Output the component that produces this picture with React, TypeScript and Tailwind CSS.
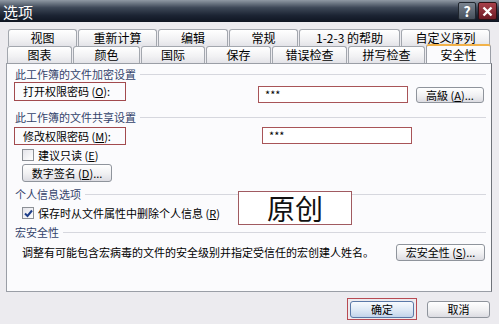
import React from 'react';

const row1 = [
  { label: '视图', w: 69 },
  { label: '重新计算', w: 79 },
  { label: '编辑', w: 70 },
  { label: '常规', w: 69 },
  { label: '1-2-3 的帮助', w: 101 },
  { label: '自定义序列', w: 89 },
];

const row2 = [
  { label: '图表', w: 65 },
  { label: '颜色', w: 67 },
  { label: '国际', w: 64 },
  { label: '保存', w: 65 },
  { label: '错误检查', w: 75 },
  { label: '拼写检查', w: 77 },
  { label: '安全性', w: 65, active: true },
];

const Tab: React.FC<{ label: string; w: number; active?: boolean }> = ({ label, w, active }) => (
  <div
    style={{ width: w }}
    className={
      active
        ? 'relative z-10 -mt-[1px] flex h-[19px] shrink-0 items-center justify-center rounded-t-[3px] border border-b-0 border-[#9a9ea6] border-t-[#f2b24a] border-t-2 bg-[#fbfbfd] pt-[1px] text-[12px] leading-none text-black'
        : 'flex h-[17px] shrink-0 items-center justify-center rounded-t-[3px] border border-b-0 border-[#a3a7ae] bg-[linear-gradient(to_bottom,#ffffff,#f1f1f3_60%,#e3e3e8)] text-[12px] leading-none text-black'
    }
  >
    {label}
  </div>
);

const GroupHeader: React.FC<{ title: string; className?: string }> = ({ title, className }) => (
  <div className={`ml-[8px] mr-[5px] flex h-[14px] items-center gap-[4px] ${className ?? ''}`}>
    <span className="whitespace-nowrap text-[11px] leading-none text-[#33436b]">{title}</span>
    <div className="h-px flex-1 bg-[#d6d7de]" />
  </div>
);

const XpButton: React.FC<{ children: React.ReactNode; className?: string }> = ({ children, className }) => (
  <div
    className={`flex items-center justify-center rounded-[3px] border border-[#8f949c] bg-[linear-gradient(to_bottom,#ffffff,#f0f0f2_55%,#dcdce2)] text-[11px] leading-none text-black ${className ?? ''}`}
  >
    {children}
  </div>
);

const Checkbox: React.FC<{ checked?: boolean }> = ({ checked }) => (
  <div className="flex h-[12px] w-[12px] items-center justify-center border border-[#8c9096] bg-[linear-gradient(135deg,#e4e4ea,#ffffff)]">
    {checked && (
      <svg width="9" height="9" viewBox="0 0 9 9">
        <path d="M1 4.5 L3.5 7 L8 1.5" fill="none" stroke="#1f3f8a" strokeWidth="2" />
      </svg>
    )}
  </div>
);

export default function App() {
  return (
    <div className="flex h-[324px] w-[499px] flex-col overflow-hidden bg-[#ecebef] font-['Noto_Sans_CJK_SC','Noto_Sans',sans-serif]">
      {/* title bar */}
      <div className="flex h-[22px] shrink-0 items-center justify-between bg-[linear-gradient(to_bottom,#9099a4,#3d4757_35%,#1c2433_70%,#0f1522)] pl-[3px] pr-[2px]">
        <span className="text-[15px] leading-none text-white">选项</span>
        <div className="flex gap-[2px]">
          <div className="flex h-[18px] w-[18px] items-center justify-center rounded-[2px] border border-[#20262e] bg-[linear-gradient(to_bottom,#7a8490,#454e5a)] text-[14px] font-bold leading-none text-white">
            ?
          </div>
          <div className="flex h-[18px] w-[19px] items-center justify-center rounded-[2px] border border-[#2a1014] bg-[linear-gradient(to_bottom,#a8404a,#6e1c26)]">
            <svg width="11" height="11" viewBox="0 0 11 11">
              <path d="M1.5 1.5 L9.5 9.5 M9.5 1.5 L1.5 9.5" stroke="#ffffff" strokeWidth="2.4" />
            </svg>
          </div>
        </div>
      </div>

      {/* tabs */}
      <div className="mt-[7px] flex flex-col">
        <div className="ml-[8px] flex gap-[1px]">
          {row1.map((t) => (
            <Tab key={t.label} {...t} />
          ))}
        </div>
        <div className="ml-[7px] -mt-px flex items-end gap-[1px]">
          {row2.map((t) => (
            <Tab key={t.label} {...t} />
          ))}
        </div>
      </div>

      {/* panel */}
      <div className="relative ml-[6px] h-[229px] w-[486px] shrink-0 border border-[#9a9ea6] border-r-[#6f737a] bg-[#fbfbfd] text-[11px] text-black">
        <GroupHeader title="此工作簿的文件加密设置" className="mt-[3px]" />

        <div className="mt-px flex h-[21px] items-start">
          <div className="ml-[7px] flex h-[19px] w-[112px] items-center border border-[#a24a4e] pl-[8px] leading-none">
            打开权限密码 (<u>O</u>):
          </div>
          <div className="ml-[132px] mt-[4px] flex h-[17px] w-[150px] items-center border border-[#a85458] bg-white pl-[6px] leading-none">
            ***
          </div>
          <XpButton className="ml-[8px] mt-[5px] h-[16px] w-[68px]">
            高級 (<u>A</u>)...
          </XpButton>
        </div>

        <GroupHeader title="此工作簿的文件共享设置" className="mt-[7px]" />

        <div className="mt-[3px] flex h-[18px] items-start">
          <div className="ml-[7px] flex h-[18px] w-[112px] items-center border border-[#a24a4e] pl-[8px] leading-none">
            修改权限密码 (<u>M</u>):
          </div>
          <div className="ml-[136px] flex h-[17px] w-[150px] items-center border border-[#a85458] bg-white pl-[6px] leading-none">
            ***
          </div>
        </div>

        <div className="ml-[15px] mt-[3px] flex h-[14px] items-center gap-[4px] leading-none">
          <Checkbox />
          <span>建议只读 (<u>E</u>)</span>
        </div>

        <XpButton className="ml-[15px] mt-[2px] h-[18px] w-[90px]">
          数字签名 (<u>D</u>)...
        </XpButton>

        <GroupHeader title="个人信息选项" className="mt-[5px]" />

        <div className="ml-[15px] mt-[5px] flex h-[14px] items-center gap-[4px] leading-none">
          <Checkbox checked />
          <span>保存时从文件属性中删除个人信息 (<u>R</u>)</span>
        </div>

        <GroupHeader title="宏安全性" className="mt-[5px]" />

        <div className="mt-[3px] flex h-[20px] items-center">
          <span className="ml-[15px] leading-none">调整有可能包含宏病毒的文件的安全级别并指定受信任的宏创建人姓名。</span>
          <XpButton className="ml-auto mr-[6px] h-[17px] w-[89px]">
            宏安全性 (<u>S</u>)...
          </XpButton>
        </div>

        {/* watermark overlay */}
        <div className="absolute left-[231px] top-[127px] flex h-[34px] w-[114px] items-center justify-center border border-[#a05a60] bg-white text-[28px] font-normal leading-none text-[#111]">
          原创
        </div>
      </div>

      {/* bottom buttons */}
      <div className="mt-[6px] flex items-start">
        <div className="ml-[347px] flex h-[22px] w-[70px] items-center justify-center border border-[#b84a52]">
          <div className="flex h-[17px] w-[64px] items-center justify-center rounded-[3px] border border-[#5b79a8] bg-[linear-gradient(to_bottom,#f7fafe,#dde8f5_55%,#c3d4ea)] text-[11px] leading-none">
            确定
          </div>
        </div>
        <XpButton className="ml-[10px] mt-[3px] h-[17px] w-[63px]">取消</XpButton>
      </div>
    </div>
  );
}
